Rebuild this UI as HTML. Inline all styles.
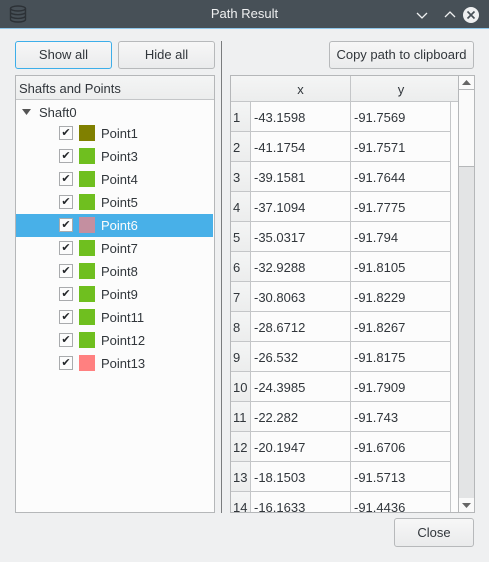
<!DOCTYPE html>
<html><head><style>
*{box-sizing:border-box;margin:0;padding:0}
body{width:489px;height:562px;background:#eff0f1;font-family:"Liberation Sans","DejaVu Sans",sans-serif;font-size:13px;color:#31363b;position:relative;overflow:hidden}
.a{position:absolute}
.title{left:0;top:0;width:489px;height:28px;background:#475057;color:#eff0f1;text-align:center;line-height:28px;font-size:13px}
.btn{position:absolute;border:1px solid #b7b9bb;border-radius:3px;background:linear-gradient(#f7f7f7,#eaebec);text-align:center;font-size:13px;line-height:25px}
.row{position:absolute;left:16px;width:197px;height:23px;line-height:23px}
.cb{position:absolute;left:43px;top:4px;width:14px;height:14px;border:1px solid #a9abad;background:#fcfcfc;font-size:11px;line-height:12px;text-align:center;color:#232629}
.sw{position:absolute;left:63px;top:3px;width:16px;height:16px}
.lbl{position:absolute;left:85px}
.cell{position:absolute;height:30px;line-height:32px;border-right:1px solid #c4c6c8;border-bottom:1px solid #c4c6c8;padding-left:3px;white-space:nowrap;overflow:hidden;background:#fcfcfc}
</style></head><body>
<div class="a title">Path Result</div>
<svg class="a" style="left:8px;top:5px" width="20" height="18" viewBox="0 0 20 18"><g fill="none" stroke="#2c3136" stroke-width="1.4"><ellipse cx="10" cy="3.5" rx="7.5" ry="2.5"/><path d="M2.5 3.5v11c0 1.4 3.4 2.5 7.5 2.5s7.5-1.1 7.5-2.5v-11M2.5 7.2c0 1.4 3.4 2.5 7.5 2.5s7.5-1.1 7.5-2.5M2.5 10.9c0 1.4 3.4 2.5 7.5 2.5s7.5-1.1 7.5-2.5"/></g></svg>
<svg class="a" style="left:414px;top:7px" width="70" height="16" viewBox="0 0 70 16"><g fill="none" stroke="#eff0f1" stroke-width="1.3"><path d="M3 6l5 5 5-5M31 10l5-5 5 5"/></g><circle cx="57" cy="8" r="8" fill="#eff0f1"/><path d="M53.5 4.5l7 7M60.5 4.5l-7 7" stroke="#475057" stroke-width="1.6"/></svg>
<div class="a" style="left:0;top:28px;width:489px;height:1px;background:#8fc7ea"></div>

<div class="btn" style="left:15px;top:41px;width:97px;height:28px;border-color:#3daee9">Show all</div>
<div class="btn" style="left:118px;top:41px;width:97px;height:28px">Hide all</div>
<div class="a" style="left:221px;top:41px;width:1px;height:472px;background:#7a7c7e"></div>
<div class="btn" style="left:329px;top:41px;width:145px;height:28px">Copy path to clipboard</div>

<div class="a" style="left:15px;top:75px;width:200px;height:438px;border:1px solid #b5b7b9;background:#fcfcfc"></div>
<div class="a" style="left:16px;top:76px;width:198px;height:24px;line-height:25px;padding-left:3px;background:linear-gradient(#f4f5f5,#eceded);border-bottom:1px solid #c4c6c8">Shafts and Points</div>
<div class="row" style="top:101px"><svg class="a" style="left:6px;top:8px" width="9" height="6"><path d="M0 0h9L4.5 6z" fill="#555"/></svg><span class="a" style="left:23px">Shaft0</span></div>
<div class="row" style="top:122px"><div class="cb">✔</div><div class="sw" style="background:#808000"></div><span class="lbl">Point1</span></div>
<div class="row" style="top:145px"><div class="cb">✔</div><div class="sw" style="background:#6fbf1f"></div><span class="lbl">Point3</span></div>
<div class="row" style="top:168px"><div class="cb">✔</div><div class="sw" style="background:#6fbf1f"></div><span class="lbl">Point4</span></div>
<div class="row" style="top:191px"><div class="cb">✔</div><div class="sw" style="background:#6fbf1f"></div><span class="lbl">Point5</span></div>
<div class="row" style="top:214px;background:#48b0e8;color:#fcfcfc"><div class="cb">✔</div><div class="sw" style="background:#c48fa0"></div><span class="lbl">Point6</span></div>
<div class="row" style="top:237px"><div class="cb">✔</div><div class="sw" style="background:#6fbf1f"></div><span class="lbl">Point7</span></div>
<div class="row" style="top:260px"><div class="cb">✔</div><div class="sw" style="background:#6fbf1f"></div><span class="lbl">Point8</span></div>
<div class="row" style="top:283px"><div class="cb">✔</div><div class="sw" style="background:#6fbf1f"></div><span class="lbl">Point9</span></div>
<div class="row" style="top:306px"><div class="cb">✔</div><div class="sw" style="background:#6fbf1f"></div><span class="lbl">Point11</span></div>
<div class="row" style="top:329px"><div class="cb">✔</div><div class="sw" style="background:#6fbf1f"></div><span class="lbl">Point12</span></div>
<div class="row" style="top:352px"><div class="cb">✔</div><div class="sw" style="background:#ff8080"></div><span class="lbl">Point13</span></div>

<div class="a" style="left:230px;top:75px;width:245px;height:438px;border:1px solid #b5b7b9;background:#fcfcfc;overflow:hidden">
<div class="a" style="left:0;top:0;width:228px;height:26px;background:linear-gradient(#f4f5f5,#eceded);border-bottom:1px solid #c4c6c8"></div>
<div class="a" style="left:20px;top:0;width:100px;height:26px;line-height:27px;text-align:center;border-right:1px solid #c4c6c8">x</div>
<div class="a" style="left:120px;top:0;width:100px;height:26px;line-height:27px;text-align:center">y</div>
<div id="rows"></div>
<div class="a" style="left:227px;top:0;width:16px;height:436px;background:#e3e4e5;border-left:1px solid #b5b7b9"></div>
<div class="a" style="left:227px;top:0;width:16px;height:14px;background:#fafafa;border-left:1px solid #b5b7b9;border-bottom:1px solid #b5b7b9"><svg class="a" style="left:3px;top:4px" width="9" height="5"><path d="M0 5h9L4.5 0z" fill="#666"/></svg></div>
<div class="a" style="left:227px;top:14px;width:16px;height:77px;background:#fafafa;border-left:1px solid #b5b7b9;border-bottom:1px solid #b5b7b9"></div>
<div class="a" style="left:227px;top:422px;width:16px;height:14px;background:#fafafa;border-left:1px solid #b5b7b9"><svg class="a" style="left:3px;top:5px" width="9" height="5"><path d="M0 0h9L4.5 5z" fill="#666"/></svg></div>
</div>
<script>
var d=[["-43.1598","-91.7569"],["-41.1754","-91.7571"],["-39.1581","-91.7644"],["-37.1094","-91.7775"],["-35.0317","-91.794"],["-32.9288","-91.8105"],["-30.8063","-91.8229"],["-28.6712","-91.8267"],["-26.532","-91.8175"],["-24.3985","-91.7909"],["-22.282","-91.743"],["-20.1947","-91.6706"],["-18.1503","-91.5713"],["-16.1633","-91.4436"]];
var h="";d.forEach(function(r,i){var t=26+i*30;
h+='<div class="cell" style="left:0;top:'+t+'px;width:20px;padding-left:2px;background:linear-gradient(#f4f5f5,#eceded)">'+(i+1)+'</div>';
h+='<div class="cell" style="left:20px;top:'+t+'px;width:100px">'+r[0]+'</div>';
h+='<div class="cell" style="left:120px;top:'+t+'px;width:100px">'+r[1]+'</div>';});
document.getElementById("rows").innerHTML=h;
</script>
<div class="btn" style="left:394px;top:518px;width:80px;height:29px;line-height:28px;background:linear-gradient(#f7f7f7,#eaebec)">Close</div>
</body></html>
